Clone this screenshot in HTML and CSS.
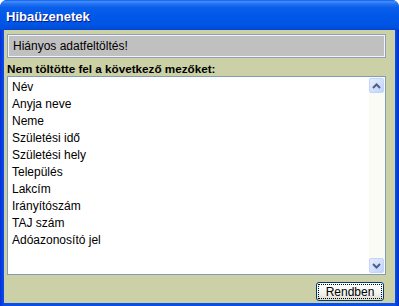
FILE: index.html
```html
<!DOCTYPE html>
<html lang="hu">

<head>
	<meta charset="UTF-8">
	<meta name="viewport" content="width=device-width, initial-scale=1.0">
	<title>Hibaüzenetek</title>
	<link rel="stylesheet" href="styles.css">
</head>

<body>
	<div class="window">
		<div class="titlebar">Hibaüzenetek</div>
		<div class="client">
			<div class="message">Hiányos adatfeltöltés!</div>
			<div class="caption">Nem töltötte fel a következő mezőket:</div>
			<div class="listbox">
				<ul class="items">
					<li>Név</li>
					<li>Anyja neve</li>
					<li>Neme</li>
					<li>Születési idő</li>
					<li>Születési hely</li>
					<li>Település</li>
					<li>Lakcím</li>
					<li>Irányítószám</li>
					<li>TAJ szám</li>
					<li>Adóazonosító jel</li>
				</ul>
				<div class="scrollbar">
					<div class="scroll-btn">
						<svg width="9" height="6" viewBox="0 0 9 6"><path d="M1 5 L4.5 1.5 L8 5" fill="none" stroke="#4d6185" stroke-width="2"/></svg>
					</div>
					<div class="scroll-track"></div>
					<div class="scroll-btn">
						<svg width="9" height="6" viewBox="0 0 9 6"><path d="M1 1 L4.5 4.5 L8 1" fill="none" stroke="#4d6185" stroke-width="2"/></svg>
					</div>
				</div>
			</div>
			<div class="actions">
				<button class="btn" type="button"><span class="focus">Rendben</span></button>
			</div>
		</div>
	</div>
</body>

</html>
```

FILE: styles.css
```css
* {
	margin: 0;
	padding: 0;
	box-sizing: border-box;
}

body {
	font-family: 'Liberation Sans', Arial, sans-serif;
	font-size: 12px;
	color: #000;
	background: #fff;
}

.window {
	width: 399px;
	height: 306px;
	display: flex;
	flex-direction: column;
	background: linear-gradient(90deg, #0831d9 0px, #0a4ee8 4px, #0a4ee8 395px, #0030c8 399px);
	border-radius: 7px 7px 0 0;
	overflow: hidden;
}

.titlebar {
	height: 30px;
	padding: 0 6px;
	display: flex;
	align-items: center;
	padding-top: 2px;
	color: #fff;
	font-weight: bold;
	font-size: 13px;
	text-shadow: 1px 1px 0 #0a1a8a;
	background: linear-gradient(180deg, #0a5fe8 0%, #4890fc 6%, #2574f6 12%, #0a5fe9 25%, #0057e8 55%, #0055e5 80%, #0050de 92%, #0044cf 100%);
}

.client {
	flex: 1;
	margin: 0 4px 3px 4px;
	background: #cbd0a7;
	padding: 4px 9px 0 3px;
	display: flex;
	flex-direction: column;
}

.message {
	height: 24px;
	background: #c0c0c0;
	border: 1px solid #8ea0bd;
	box-shadow: inset 0 0 0 1px #f4f4f4;
	padding: 4px 5px 0;
	font-size: 12px;
}

.caption {
	font-weight: bold;
	font-size: 11.7px;
	margin-top: 4px;
	height: 14px;
	line-height: 14px;
}

.listbox {
	height: 199px;
	background: #fff;
	border: 1px solid #7f9db9;
	display: flex;
}

.items {
	flex: 1;
	list-style: none;
	padding: 2px 0 0 4px;
}

.items li {
	height: 17px;
	line-height: 17px;
}

.scrollbar {
	width: 17px;
	display: flex;
	flex-direction: column;
	background: #fbfbf6;
	border-left: 1px solid #fefefe;
	padding: 1px 1px 1px 0;
}

.scroll-track {
	flex: 1;
}

.scroll-btn {
	height: 15px;
	width: 15px;
	border: 1px solid #c3d3fd;
	border-radius: 2px;
	background: linear-gradient(135deg, #e6eefc, #c1d3fb);
	display: flex;
	align-items: center;
	justify-content: center;
}

.actions {
	display: flex;
	justify-content: flex-end;
	padding: 7px 2px 0 0;
}

.btn {
	width: 68px;
	height: 19px;
	border: 1px solid #003c74;
	border-radius: 3px;
	background: linear-gradient(180deg, #ffffff 0%, #f3f3ef 60%, #dcdcd3 100%);
	font-family: 'Liberation Sans', Arial, sans-serif;
	font-size: 12px;
	color: #000;
	padding: 1px;
	display: flex;
}

.focus {
	flex: 1;
	border: 1px dotted #000;
	display: flex;
	align-items: center;
	justify-content: center;
	line-height: 1;
}
```
